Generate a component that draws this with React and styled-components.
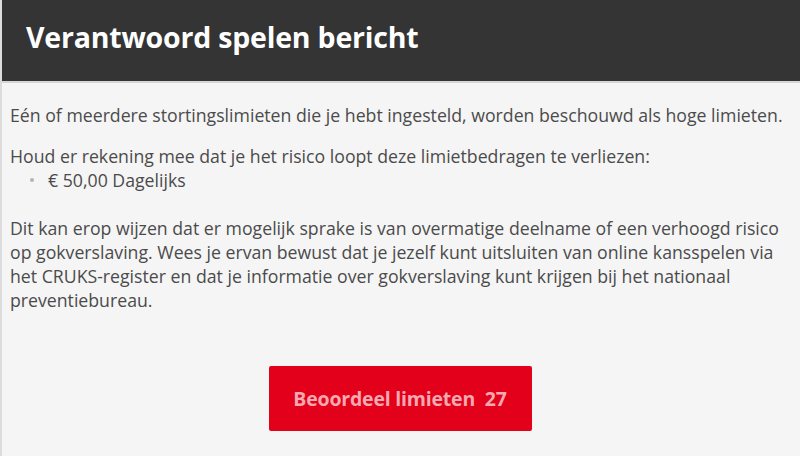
import React from "react";
import styled, { createGlobalStyle } from "styled-components";

const GlobalStyle = createGlobalStyle`
  html, body {
    margin: 0;
    padding: 0;
    background: #f5f5f5;
  }
  body {
    font-family: "Open Sans", "Noto Sans", sans-serif;
  }
`;

const Page = styled.div`
  width: 800px;
  height: 456px;
  display: flex;
  flex-direction: column;
  background: #f5f5f5;
  border-left: 2px solid #dcdcdc;
  box-sizing: border-box;
  overflow: hidden;
`;

const Header = styled.header`
  height: 81px;
  flex-shrink: 0;
  display: flex;
  align-items: center;
  padding-left: 24px;
  background: #343434;
  border-bottom: 2px solid #d6d6d6;
`;

const Title = styled.h1`
  margin: 0;
  padding-bottom: 8px;
  color: #ffffff;
  font-size: 28.5px;
  font-weight: 700;
  letter-spacing: -0.2px;
`;

const Body = styled.main`
  padding: 20px 10px 0 8px;
  color: #4b4b4b;
  font-size: 17.7px;
  line-height: 24px;
`;

const Paragraph = styled.p`
  margin: 0 0 ${(p) => p.$gap ?? 17}px;
`;

const List = styled.ul`
  margin: 0 0 24px;
  padding: 0 0 0 20px;
  list-style: none;
`;

const Item = styled.li`
  display: flex;
  align-items: center;
  gap: 14px;

  &::before {
    content: "";
    width: 4px;
    height: 4px;
    border-radius: 50%;
    background: #b4b4b4;
  }
`;

const Actions = styled.div`
  display: flex;
  justify-content: center;
  padding-top: 54px;
`;

const Button = styled.button`
  width: 263px;
  height: 65px;
  border: none;
  border-radius: 2px;
  background: #e2001a;
  color: #f7a9b0;
  font-family: inherit;
  font-size: 19.5px;
  font-weight: 700;
  letter-spacing: -0.2px;
  cursor: pointer;
  white-space: pre;
`;

export default function App() {
  return (
    <>
      <GlobalStyle />
      <Page>
        <Header>
          <Title>Verantwoord spelen bericht</Title>
        </Header>
        <Body>
          <Paragraph>
            Eén of meerdere stortingslimieten die je hebt ingesteld, worden
            beschouwd als hoge limieten.
          </Paragraph>
          <Paragraph $gap={0}>
            Houd er rekening mee dat je het risico loopt deze limietbedragen te
            verliezen:
          </Paragraph>
          <List>
            <Item>€ 50,00 Dagelijks</Item>
          </List>
          <Paragraph $gap={0}>
            Dit kan erop wijzen dat er mogelijk sprake is van overmatige
            deelname of een verhoogd risico op gokverslaving. Wees je ervan
            bewust dat je jezelf kunt uitsluiten van online kansspelen via het
            CRUKS-register en dat je informatie over gokverslaving kunt krijgen
            bij het nationaal preventiebureau.
          </Paragraph>
          <Actions>
            <Button>{"Beoordeel limieten  27"}</Button>
          </Actions>
        </Body>
      </Page>
    </>
  );
}
